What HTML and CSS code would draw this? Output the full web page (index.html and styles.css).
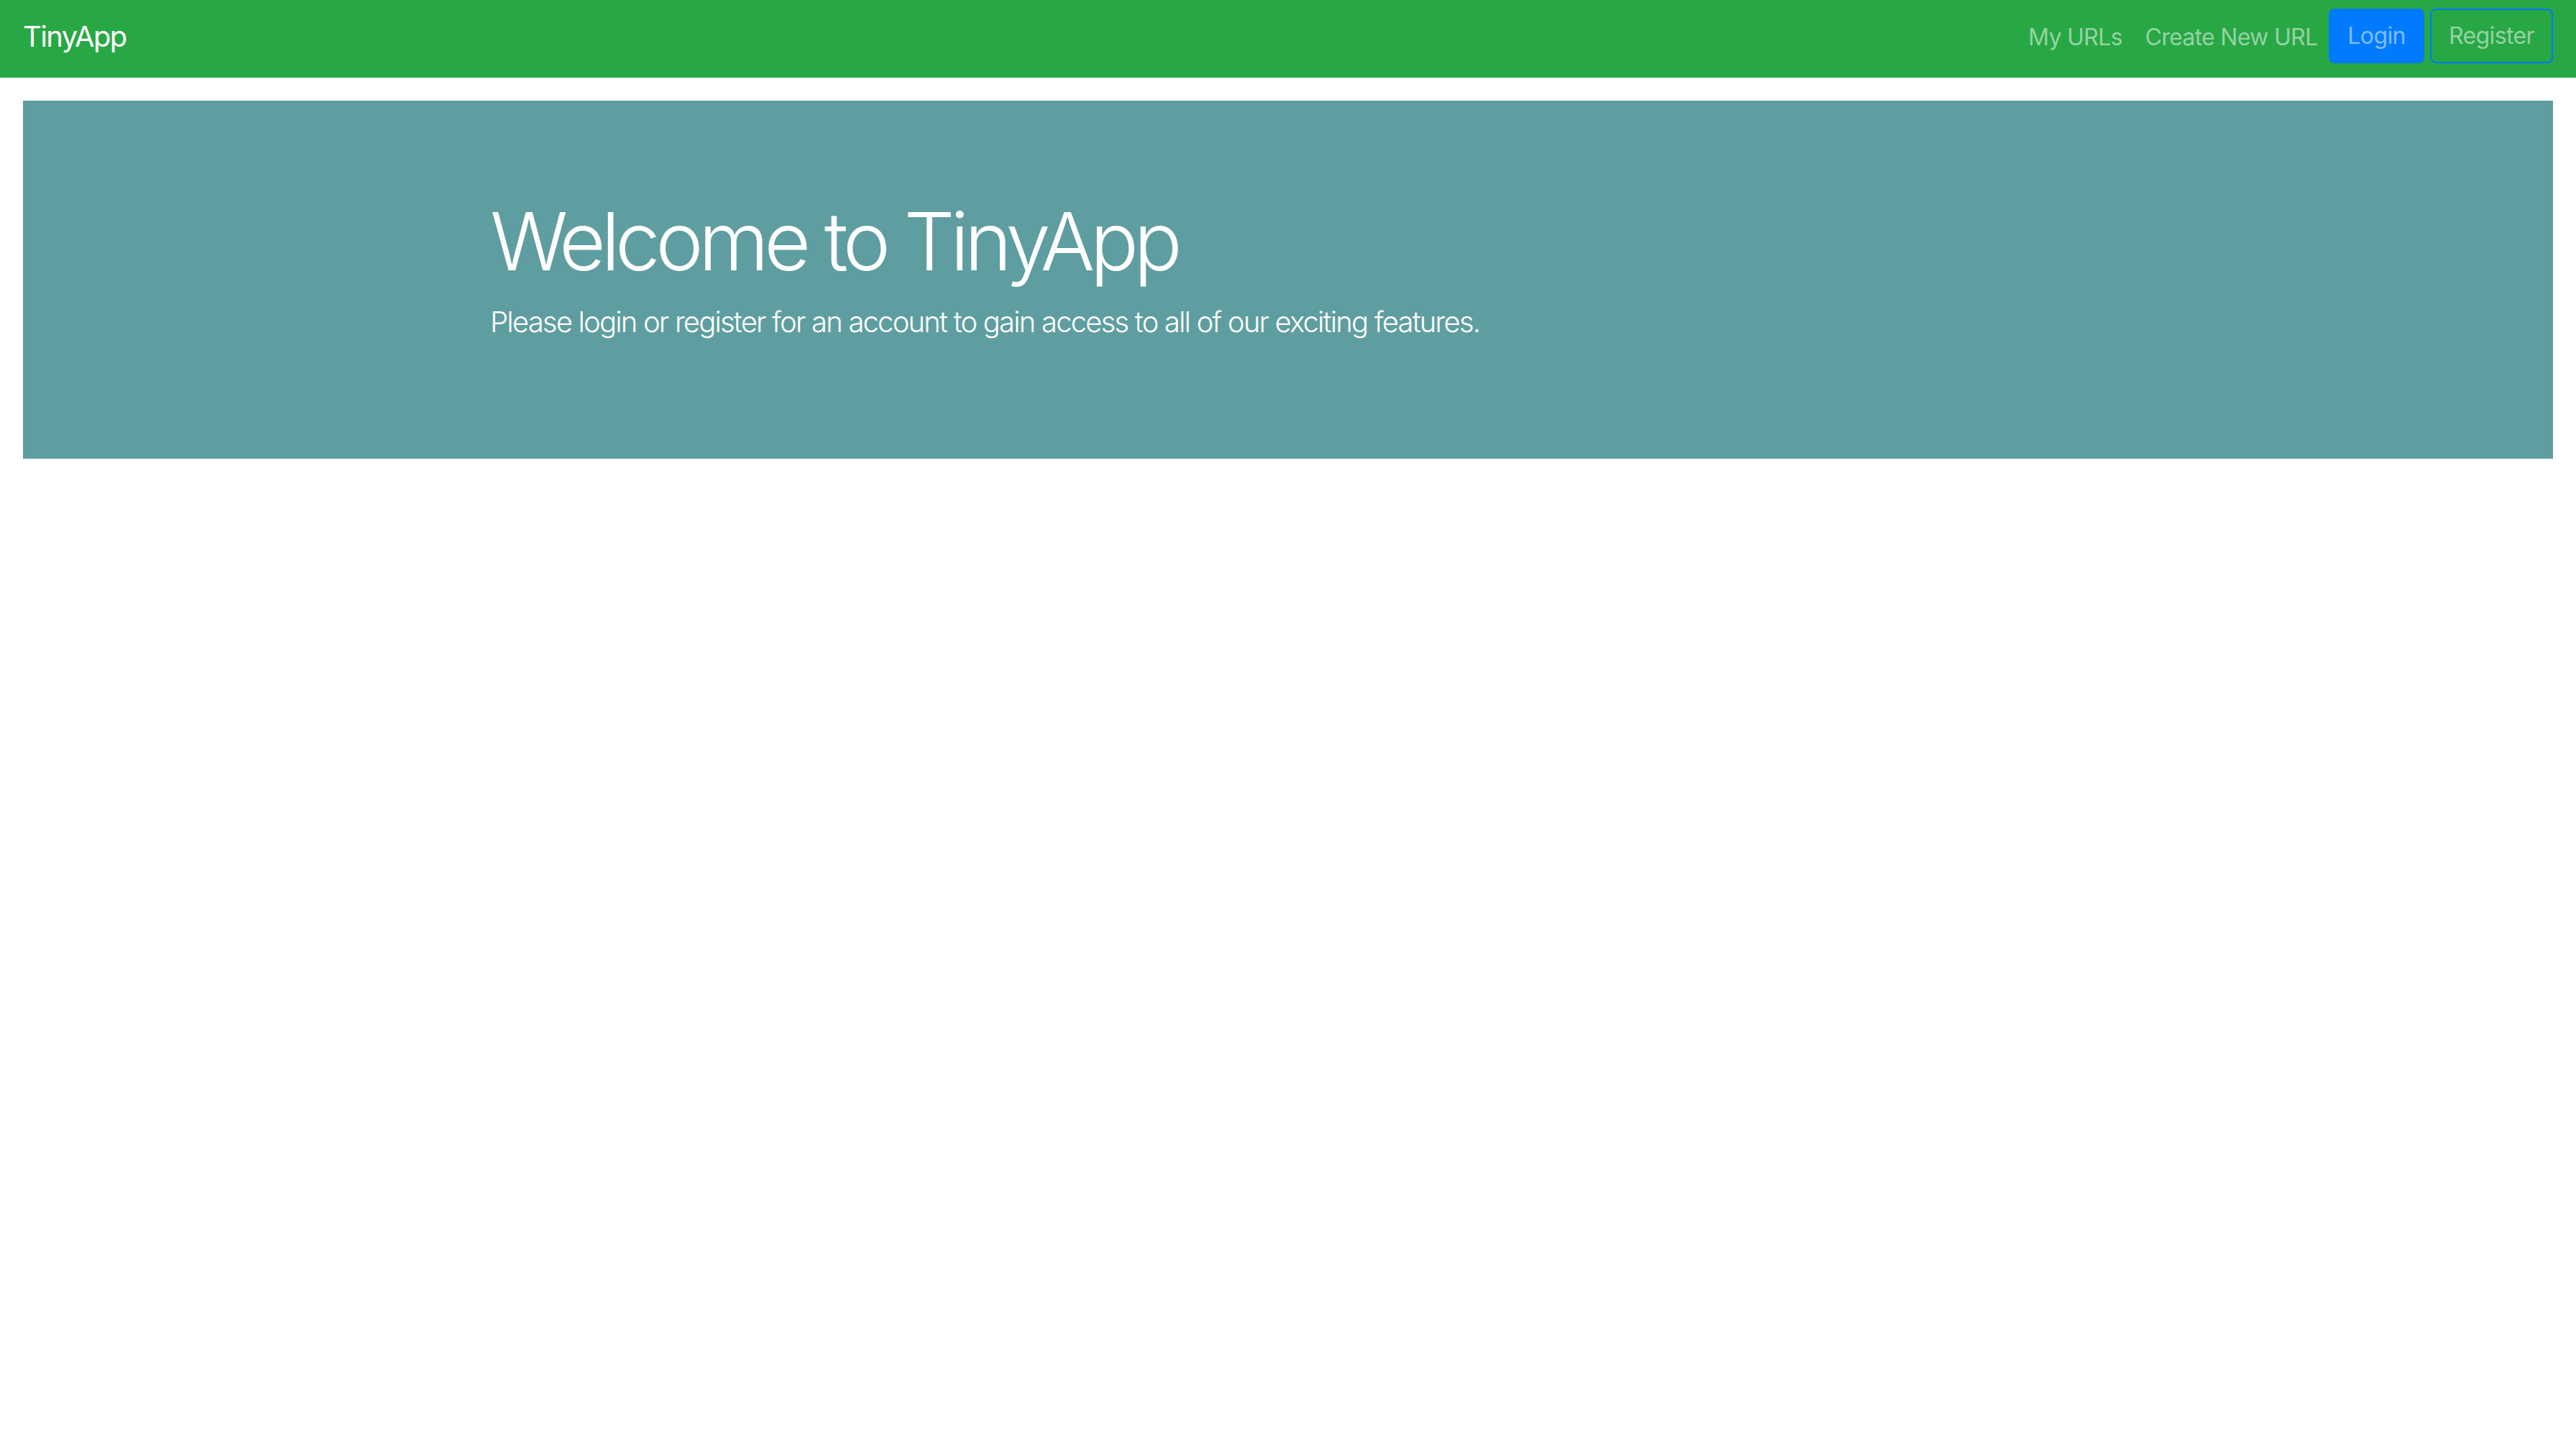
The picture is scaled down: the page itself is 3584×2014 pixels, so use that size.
FILE: index.html
```html
<!DOCTYPE html>
<html lang="en">
<head>
<meta charset="utf-8">
<title>TinyApp</title>
<link rel="stylesheet" href="styles.css">
</head>
<body>
<nav class="navbar">
  <a class="brand" href="#">TinyApp</a>
  <div class="nav-right">
    <a class="nav-link" href="#">My URLs</a>
    <a class="nav-link" href="#">Create New URL</a>
    <a class="btn btn-primary" href="#">Login</a>
    <a class="btn btn-outline" href="#">Register</a>
  </div>
</nav>
<main class="page">
  <section class="jumbotron">
    <div class="container">
      <h1 class="display">Welcome to TinyApp</h1>
      <p class="lead">Please login or register for an account to gain access to all of our exciting features.</p>
    </div>
  </section>
</main>
</body>
</html>
```
FILE: styles.css
```css
* { box-sizing: border-box; }
html, body { margin: 0; padding: 0; background: #fff; }
body {
  font-family: Inter, "Liberation Sans", Arial, sans-serif;
  color: #212529;
}
a { text-decoration: none; }

.navbar {
  display: flex;
  align-items: flex-start;
  height: 108px;
  padding: 0 32px;
  background: #28a745;
}
.brand {
  margin-top: 21px;
  font-size: 40px;
  line-height: 60px;
  color: #fff;
  letter-spacing: -1.6px;
}
.nav-right {
  margin-left: auto;
  display: flex;
  align-items: flex-start;
}
.nav-link {
  margin-top: 28px;
  padding: 0 16px;
  font-size: 32px;
  line-height: 48px;
  color: rgba(255, 255, 255, 0.5);
  letter-spacing: -0.7px;
}
.btn {
  margin-top: 12px;
  padding: 12px 24px;
  font-size: 32px;
  line-height: 48px;
  border: 2px solid #007bff;
  border-radius: 8px;
  color: rgba(255, 255, 255, 0.5);
  letter-spacing: -0.6px;
}
.btn-primary { background: #007bff; }
.btn-outline { background: transparent; margin-left: 8px; }

.page { padding: 32px; }
.jumbotron {
  background: #5f9ea0;
  padding: 128px 64px;
}
.container {
  max-width: 2280px;
  margin: 0 auto;
  padding: 0 30px;
  color: #fff;
}
.display {
  margin: 0 0 16px;
  font-size: 112px;
  font-weight: 300;
  line-height: 1.2;
  letter-spacing: -6.5px;
}
.lead {
  margin: 0 0 32px;
  font-size: 40px;
  font-weight: 300;
  line-height: 60px;
  letter-spacing: -1.8px;
}
```
